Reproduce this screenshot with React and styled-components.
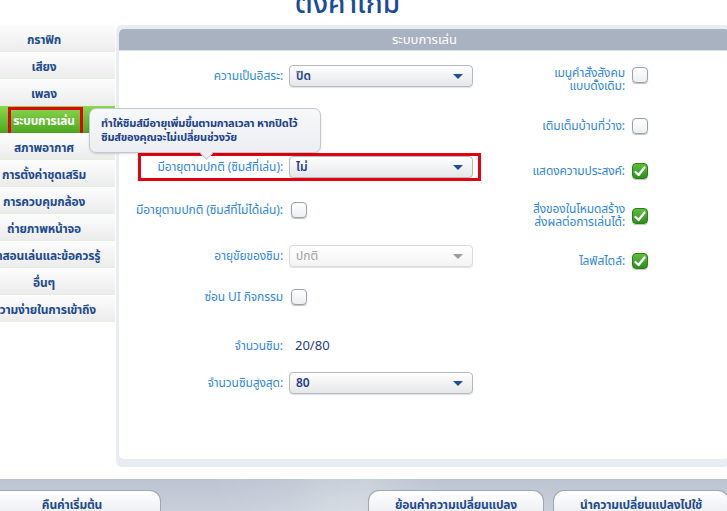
import React from "react";
import styled, { createGlobalStyle, css } from "styled-components";

const Global = createGlobalStyle`
  html, body { margin: 0; padding: 0; background: #ffffff; }
  body { width: 727px; height: 511px; overflow: hidden; font-family: "Noto Sans Thai", "Noto Sans", "DejaVu Sans", sans-serif; }
  * { box-sizing: border-box; }
`;

const Page = styled.div`
  position: relative;
  width: 727px;
  height: 511px;
  display: flex;
  flex-direction: column;
  overflow: hidden;
  background: #fff;
`;

const TitleBar = styled.div`
  height: 25px;
  overflow: hidden;
  display: flex;
  justify-content: center;
`;

const Title = styled.h1`
  margin: -9px 0 0 -32px;
  font-size: 28px;
  line-height: 28px;
  font-weight: 500;
  color: #1b4a9c;
`;

const Body = styled.div`
  height: 442px;
  display: flex;
  align-items: stretch;
`;

const Sidebar = styled.nav`
  width: 142px;
  margin-left: -27px;
  display: flex;
  flex-direction: column;
`;

const NavItem = styled.div`
  position: relative;
  height: 27px;
  padding-top: 4px;
  display: flex;
  align-items: center;
  justify-content: center;
  font-size: 12px;
  font-weight: 700;
  letter-spacing: -0.2px;
  color: #1e4b8e;
  white-space: nowrap;
  background: linear-gradient(#fdfdfd, #ececec);
  border-bottom: 1px solid #e4efdd;
  ${(p) =>
    p.$active &&
    css`
      color: #ffffff;
      background: linear-gradient(#8ad84f, #4ea922);
      border-bottom: 1px solid #4a9d20;
    `}
`;

const RedBox = styled.div`
  position: absolute;
  border: 3px solid #e3000f;
  pointer-events: none;
`;

const Panel = styled.section`
  flex: 1;
  margin-left: 1px;
  margin-right: -3px;
  background: #e9edf3;
  border-radius: 6px;
  padding: 4px 0 8px 3px;
  display: flex;
`;

const PanelInner = styled.div`
  flex: 1;
  background: #fff;
  border-radius: 5px;
  display: flex;
  flex-direction: column;
  overflow: hidden;
`;

const PanelHeader = styled.div`
  height: 22px;
  background: #a8b2c1;
  border-bottom: 1px solid #d8dde6;
  color: #fff;
  font-size: 13px;
  display: flex;
  align-items: center;
  justify-content: center;
`;

const Content = styled.div`
  display: flex;
  padding-top: 14px;
`;

const LeftCol = styled.div`
  width: 354px;
  flex: none;
  display: flex;
  flex-direction: column;
`;

const RightCol = styled.div`
  margin-left: 7px;
  display: flex;
  flex-direction: column;
`;

const Row = styled.div`
  position: relative;
  height: ${(p) => p.$h || 22}px;
  margin-top: ${(p) => p.$mt || 0}px;
  display: flex;
  align-items: ${(p) => (p.$top ? "flex-start" : "center")};
`;

const Label = styled.div`
  width: ${(p) => p.$w}px;
  flex: none;
  text-align: right;
  font-size: 12px;
  line-height: 13px;
  letter-spacing: -0.1px;
  color: #2f86dc;
  white-space: nowrap;
`;

const Gap = styled.div`
  width: ${(p) => p.$w}px;
  flex: none;
`;

const Select = styled.div`
  width: 184px;
  height: 22px;
  border-radius: 4px;
  border: 1px solid ${(p) => (p.$disabled ? "#dadada" : "#b6b9be")};
  background: ${(p) =>
    p.$disabled ? "linear-gradient(#ffffff, #f4f4f4)" : "linear-gradient(#ffffff, #e6e7e9)"};
  box-shadow: 0 1px 1px rgba(0, 0, 0, 0.12);
  display: flex;
  align-items: center;
  justify-content: space-between;
  padding: 0 9px 0 6px;
  font-size: 12px;
  font-weight: ${(p) => (p.$disabled ? 400 : 600)};
  color: ${(p) => (p.$disabled ? "#a0a0a0" : "#1c3d8c")};
`;

const Arrow = styled.span`
  width: 0;
  height: 0;
  border-left: 5px solid transparent;
  border-right: 5px solid transparent;
  border-top: 5px solid ${(p) => (p.$disabled ? "#9c9c9c" : "#1d4ea0")};
`;

const Value = styled.div`
  font-size: 13px;
  color: #1c3d8c;
`;

const Box = styled.div`
  width: 16px;
  height: 16px;
  flex: none;
  border-radius: 4px;
  border: 1px solid ${(p) => (p.$checked ? "#2f7a1d" : "#9aa0a8")};
  background: ${(p) =>
    p.$checked ? "linear-gradient(#5cbf3a, #2f8e1c)" : "linear-gradient(#ffffff, #eceef1)"};
  box-shadow: 0 1px 1px rgba(0, 0, 0, 0.25);
  display: flex;
  align-items: center;
  justify-content: center;
`;

const Check = ({ checked }) => (
  <Box $checked={checked}>
    {checked && (
      <svg width="12" height="11" viewBox="0 0 12 11">
        <path d="M1.5 6 L4.6 9 L10.5 1.6" fill="none" stroke="#fff" strokeWidth="2.4" strokeLinecap="round" strokeLinejoin="round" />
      </svg>
    )}
  </Box>
);

const Tooltip = styled.div`
  position: absolute;
  left: 89px;
  top: 108px;
  width: 232px;
  height: 45px;
  border-radius: 7px;
  border: 1px solid #c3c7ce;
  background: linear-gradient(#f7f8f9, #eceef1);
  box-shadow: 0 1px 2px rgba(0, 0, 0, 0.15);
  padding: 8px 0 0 11px;
  font-size: 11px;
  line-height: 14px;
  font-weight: 700;
  letter-spacing: -0.2px;
  color: #1b418c;
  white-space: nowrap;
  &::after {
    content: "";
    position: absolute;
    left: 112px;
    bottom: -6px;
    width: 8px;
    height: 8px;
    background: #eceef1;
    border-right: 1px solid #c3c7ce;
    border-bottom: 1px solid #c3c7ce;
    transform: rotate(45deg);
  }
`;

const Footer = styled.footer`
  margin-top: 12px;
  height: 32px;
  background:
    linear-gradient(115deg, transparent 40%, rgba(255, 255, 255, 0.18) 50%, transparent 60%),
    linear-gradient(65deg, transparent 30%, rgba(255, 255, 255, 0.12) 45%, transparent 55%),
    linear-gradient(#bcc4d1, #c9d0db);
  display: flex;
  align-items: flex-end;
`;

const FooterButton = styled.button`
  width: ${(p) => p.$w}px;
  height: 21px;
  margin-left: ${(p) => p.$ml || 0}px;
  border: 1px solid #9ea6b2;
  border-bottom: none;
  border-radius: 11px 11px 0 0;
  background: linear-gradient(#ffffff, #eef0f3);
  font-family: inherit;
  font-size: 12px;
  font-weight: 700;
  letter-spacing: -0.2px;
  color: #1e4b8e;
  padding: 5px 0 0;
  display: flex;
  align-items: flex-start;
  justify-content: center;
  flex: none;
`;

const navItems = [
  "กราฟิก",
  "เสียง",
  "เพลง",
  "ระบบการเล่น",
  "สภาพอากาศ",
  "การตั้งค่าชุดเสริม",
  "การควบคุมกล้อง",
  "ถ่ายภาพหน้าจอ",
  "บทสอนเล่นและข้อควรรู้",
  "อื่นๆ",
  "ความง่ายในการเข้าถึง",
];

export default function App() {
  return (
    <>
      <Global />
      <Page>
        <TitleBar>
          <Title>ตั้งค่าเกม</Title>
        </TitleBar>
        <Body>
          <Sidebar>
            {navItems.map((t, i) => (
              <NavItem key={t} $active={i === 3}>
                {t}
                {i === 3 && <RedBox style={{ left: 35, right: 32, top: 1, bottom: -4 }} />}
              </NavItem>
            ))}
          </Sidebar>
          <Panel>
            <PanelInner>
              <PanelHeader>ระบบการเล่น</PanelHeader>
              <Content>
                <LeftCol>
                  <Row>
                    <Label $w={164}>ความเป็นอิสระ:</Label>
                    <Gap $w={6} />
                    <Select>
                      ปิด
                      <Arrow />
                    </Select>
                  </Row>
                  <Row $mt={69}>
                    <Label $w={164}>มีอายุตามปกติ (ซิมส์ที่เล่น):</Label>
                    <Gap $w={6} />
                    <Select>
                      ไม่
                      <Arrow />
                    </Select>
                    <RedBox style={{ left: 19, right: -8, top: -3, bottom: -3 }} />
                  </Row>
                  <Row $mt={21}>
                    <Label $w={164}>มีอายุตามปกติ (ซิมส์ที่ไม่ได้เล่น):</Label>
                    <Gap $w={8} />
                    <Check />
                  </Row>
                  <Row $mt={24}>
                    <Label $w={164}>อายุขัยของซิม:</Label>
                    <Gap $w={6} />
                    <Select $disabled>
                      ปกติ
                      <Arrow $disabled />
                    </Select>
                  </Row>
                  <Row $mt={19}>
                    <Label $w={164}>ซ่อน UI กิจกรรม</Label>
                    <Gap $w={8} />
                    <Check />
                  </Row>
                  <Row $mt={27}>
                    <Label $w={164}>จำนวนซิม:</Label>
                    <Gap $w={12} />
                    <Value>20/80</Value>
                  </Row>
                  <Row $mt={15}>
                    <Label $w={164}>จำนวนซิมสูงสุด:</Label>
                    <Gap $w={6} />
                    <Select>
                      80
                      <Arrow />
                    </Select>
                  </Row>
                </LeftCol>
                <RightCol>
                  <Row $h={28} $top $mt={2}>
                    <Label $w={145}>
                      เมนูคำสั่งสังคม
                      <br />
                      แบบดั้งเดิม:
                    </Label>
                    <Gap $w={7} />
                    <Check />
                  </Row>
                  <Row $mt={20}>
                    <Label $w={145}>เติมเต็มบ้านที่ว่าง:</Label>
                    <Gap $w={7} />
                    <Check />
                  </Row>
                  <Row $mt={23}>
                    <Label $w={145}>แสดงความประสงค์:</Label>
                    <Gap $w={7} />
                    <Check checked />
                  </Row>
                  <Row $h={28} $mt={20}>
                    <Label $w={145}>
                      สิ่งของในโหมดสร้าง
                      <br />
                      ส่งผลต่อการเล่นได้:
                    </Label>
                    <Gap $w={7} />
                    <Check checked />
                  </Row>
                  <Row $mt={20}>
                    <Label $w={145}>ไลฟ์สไตล์:</Label>
                    <Gap $w={7} />
                    <Check checked />
                  </Row>
                </RightCol>
              </Content>
            </PanelInner>
          </Panel>
        </Body>
        <Footer>
          <FooterButton $w={178} $ml={-17}>คืนค่าเริ่มต้น</FooterButton>
          <FooterButton $w={176} $ml={207}>ย้อนค่าความเปลี่ยนแปลง</FooterButton>
          <FooterButton $w={176} $ml={9}>นำความเปลี่ยนแปลงไปใช้</FooterButton>
        </Footer>
        <Tooltip>
          ทำให้ซิมส์มีอายุเพิ่มขึ้นตามกาลเวลา หากปิดไว้
          <br />
          ซิมส์ของคุณจะไม่เปลี่ยนช่วงวัย
        </Tooltip>
      </Page>
    </>
  );
}
